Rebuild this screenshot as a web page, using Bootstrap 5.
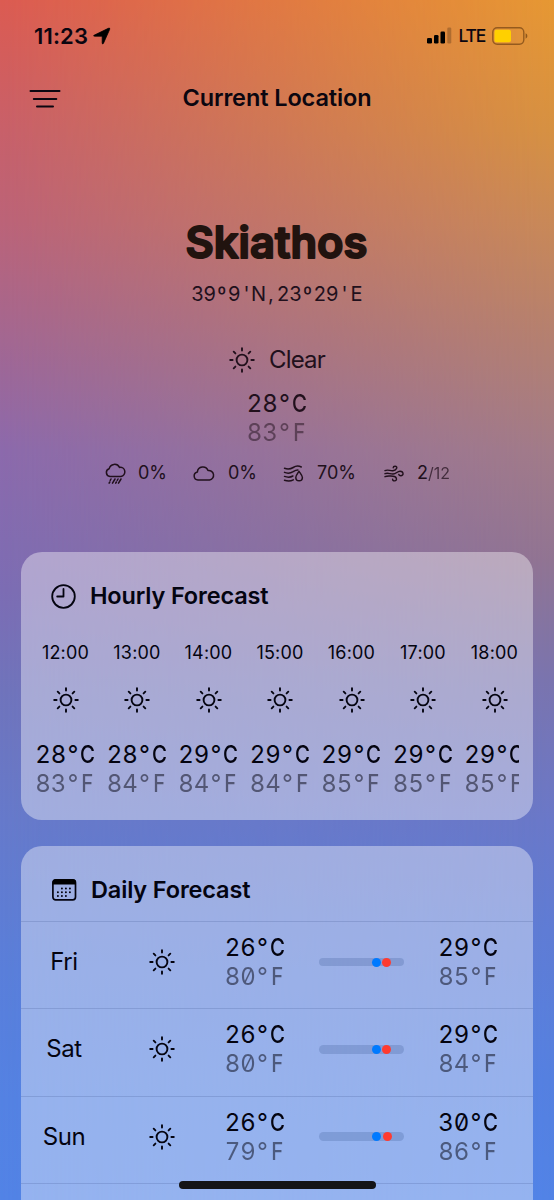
<!DOCTYPE html>
<html lang="en">
<head>
<meta charset="utf-8">
<meta name="viewport" content="width=device-width, initial-scale=1">
<title>Weather</title>
<link href="https://cdn.jsdelivr.net/npm/bootstrap@5.3.0/dist/css/bootstrap.min.css" rel="stylesheet">
<style>
body{font-family:Inter,"Liberation Sans",sans-serif;color:#0b0610;line-height:1;margin:0}
svg{display:block;flex:none;overflow:visible}
.ln{fill:none;stroke:currentColor;stroke-linecap:round;stroke-linejoin:round}
.screen{width:554px;height:1200px;isolation:isolate;background:linear-gradient(#dc5b52 0,#c8606a 130px,#bc6378 220px,#a36792 340px,#8c6aac 450px,#7c6db4 590px,#7074bc 690px,#667acb 820px,#5a7fda 970px,#5482e3 1100px,#5283e6 1200px)}
.screen::before{content:"";position:absolute;inset:0;z-index:-1;background:linear-gradient(#e69833 0,#d69142 130px,#c98957 220px,#b48070 340px,#a27b88 450px,#917492 560px,#7a74ae 680px,#6a78c8 820px,#5f7cd4 930px,#5580e0 1080px,#5283e6 1200px);-webkit-mask-image:linear-gradient(90deg,transparent,#000);mask-image:linear-gradient(90deg,transparent,#000)}
.status{height:70px;padding:1px 26px 0 34px}
.clock{font-size:22px;font-weight:600;letter-spacing:.15px}
.lte{font-size:17.5px;font-weight:500;letter-spacing:-1.2px}
.topbar{height:57px;padding-left:29px}
.title{font-size:23.5px;font-weight:600;letter-spacing:-.1px;top:16px}
.hero{height:425px;padding-top:88px;color:#21101c}
.coords{font-size:20px;height:22px;margin-top:10px}
.cond{font-size:24px;margin-top:42px;height:26px;gap:14px;letter-spacing:-.8px}
.mono{font-size:24px;font-feature-settings:"tnum","zero";white-space:nowrap;height:29px;line-height:29px;width:59px;display:flex}
.mono span{width:14.8px;display:inline-flex;justify-content:center}
.mono span.num{width:29.6px}
.mono .unit{transform:scaleX(.85);font-weight:500}
.mono.f{opacity:.5}
.coords span{width:12.25px;display:inline-flex;justify-content:center}
.stats{margin-top:12px;height:28px;font-size:18px;padding-left:105px}
.stats>div{display:flex;align-items:center}
.glass{background:rgba(255,255,255,.39);border:0;border-radius:21px;margin:0 21.5px 0 21px;color:#040410}
.hourly{height:268px}
.daily{height:354px;margin-top:26px;border-radius:21px 21px 0 0;overflow:hidden}
.head{font-size:23.5px;font-weight:600;letter-spacing:-.15px}
.hours{margin:0 13.5px 0 15px;gap:12.5px;overflow:hidden}
.hour{width:59px;flex:none}
.hour svg{margin:24.5px 0 27px}
.hour time{font-size:18px;letter-spacing:.2px;height:20px;line-height:20px;white-space:nowrap}
.day{height:87.3px;padding-bottom:6px;border-top:1px solid rgba(50,70,130,.19);display:grid;grid-template-columns:86px 111px 94px 119px 59px;align-items:center}
.day .name{font-size:24px;text-align:center;letter-spacing:-.4px}
.track{width:85px;height:8.5px;border-radius:5px;background:rgba(65,95,155,.27);position:relative}
.dot{position:absolute;width:9px;height:9px;border-radius:50%;top:0;background:#007aff}
.dot.hi{background:#ff3b30}
.home{position:absolute;left:179px;top:1181px;width:197px;height:7.5px;border-radius:4px;background:#141416}
</style>
</head>
<body>
<svg width="0" height="0" class="position-absolute"><defs>
<symbol id="sun" viewBox="0 0 26 26"><g class="ln" stroke-width="1.9"><circle cx="13" cy="13" r="5.4"/><path d="M13 1.2v2.4M13 22.4v2.4M1.2 13h2.4M22.4 13h2.4M4.7 4.7l1.7 1.7M19.6 19.6l1.7 1.7M4.7 21.3l1.7-1.7M19.6 6.4l1.7-1.7"/></g></symbol>
</defs></svg>
<main class="screen position-relative overflow-hidden">
<div class="status d-flex align-items-center">
<span class="clock">11:23</span>
<svg style="margin-left:5px" width="18" height="18" viewBox="0 0 19 18"><path d="M1 8.3 16.2.9Q18.4 0 17.5 2.2L11 16.8Q10 18.2 9.7 16.5V9.9Q9.7 9.2 9 9.2H1.7Q-.1 9.1 1 8.3Z" fill="#000" stroke="#000" stroke-width=".8" stroke-linejoin="round"/></svg>
<svg class="ms-auto" width="25" height="17" viewBox="0 0 25 17"><g fill="#000"><rect x="0" y="11" width="5" height="5.5" rx="1.3"/><rect x="7" y="8" width="4.5" height="8.5" rx="1.3"/><rect x="13.5" y="4.5" width="4.5" height="12" rx="1.3"/><rect x="20.3" y=".5" width="4" height="16" rx="1.3" opacity=".22"/></g></svg>
<span class="lte" style="margin-left:6px">LTE</span>
<svg style="margin-left:7px" width="36" height="18" viewBox="0 0 36 18"><rect x=".8" y=".8" width="31" height="16.4" rx="4.4" fill="none" stroke="#6b3d10" stroke-opacity=".65" stroke-width="1.4"/><rect x="2.5" y="2.8" width="16.5" height="12.4" rx="2" fill="#ffd000"/><path d="M33.6 6.3q1.8.8 1.8 2.7t-1.8 2.7z" fill="#6b3d10" opacity=".7"/></svg>
</div>
<header class="topbar d-flex align-items-center position-relative">
<svg width="32" height="20" viewBox="0 0 32 20"><path class="ln" stroke-width="2" d="M1.5 2h29M4.8 10h22.5M8 17.6h16"/></svg>
<span class="title position-absolute start-50 translate-middle-x text-nowrap">Current Location</span>
</header>
<section class="hero d-flex flex-column align-items-center">
<svg width="200" height="58" viewBox="0 0 200 58"><text x="99.5" y="43" text-anchor="middle" textLength="182" lengthAdjust="spacingAndGlyphs" font-size="44" font-weight="600" fill="#21130f" stroke="#21130f" stroke-width="2" stroke-linejoin="round">Skiathos</text></svg>
<div class="coords d-flex align-items-center"><span>3</span><span>9</span><span>º</span><span>9</span><span>'</span><span>N</span><span>,</span><span>2</span><span>3</span><span>º</span><span>2</span><span>9</span><span>'</span><span>E</span></div>
<div class="cond d-flex align-items-center"><svg width="26" height="26"><use href="#sun"/></svg><span>Clear</span></div>
<div class="mono" style="margin-top:16px"><span class="num">28</span><span>°</span><span class="unit">C</span></div>
<div class="mono f"><span class="num">83</span><span>°</span><span class="unit">F</span></div>
<div class="stats d-flex align-self-start">
<div style="width:88px"><svg width="21" height="21" viewBox="0 0 21 21"><g class="ln" stroke-width="1.5"><path d="M5 13.5A4 4 0 0 1 4.2 5.7 5.5 5.5 0 0 1 14.5 4.4 4.6 4.6 0 1 1 16 13.5Z"/><path d="M6 16l-.8 1.4M10 16l-2.5 4.2M13 16l-.8 1.4M16 16l-2.5 4.2M4.8 19l-.7 1.2M11.4 19l-.7 1.2"/></g></svg><span style="margin-left:12px">0%</span></div>
<div style="width:90px"><svg width="22" height="15" viewBox="0 0 22 15"><path class="ln" stroke-width="1.5" d="M5 14A4.1 4.1 0 0 1 4.4 5.9 5.5 5.5 0 0 1 15 4.5 4.8 4.8 0 1 1 16.5 14Z"/></svg><span style="margin-left:13px">0%</span></div>
<div style="width:101px"><svg width="21" height="17" viewBox="0 0 21 17"><g class="ln" stroke-width="1.5"><path d="M1.5 3.3C5 4.7 7.5 4.2 10.2 2.5 13 .7 15.4.6 18.3 2M1.5 7.4c3.5 1.4 6 .9 8.7-.7 1.6-1 3.1-1.6 4.7-1.6M1.5 11.4c3.3 1.2 6 1 8.4-.4M1.5 15.3c3.4 1.2 6.3 1 8.8-.4M16 6.3c-1.7 2.5-3.2 4.3-3.2 6.2a3.3 3.3 0 0 0 6.6 0c0-1.9-1.7-3.7-3.4-6.2Z"/></g></svg><span style="margin-left:13px">70%</span></div>
<div><svg width="20" height="17" viewBox="0 0 20 17"><g class="ln" stroke-width="1.4"><path d="M1 5.6C4 4.3 6 6 9 5.7 13 5.4 14.2 1.2 11 1.2c-1.2 0-1.8.7-1.8 1.5M1 8.7c3-1.2 5 .4 8 .3 3.4-.1 4-2.6 7-2.8 3.8-.1 4 4.6.8 4.6-1.2 0-1.8-.5-2-1.3M1 11.7c3-1.3 5-.5 8-.5 4 0 4.6 4.7 1.6 4.7-1.4 0-2-.8-2-1.6"/></g></svg><span style="margin-left:13px">2<span style="font-size:16px;opacity:.72">/12</span></span></div>
</div>
</section>
<section class="glass card hourly">
<div class="head d-flex align-items-center" style="padding:31px 0 0 30px;height:57px;gap:14px"><svg width="25" height="25" viewBox="0 0 25 25"><g class="ln" stroke-width="1.8"><circle cx="12.5" cy="12.5" r="11.3"/><path d="M12.5 5v7.5H6.2"/></g></svg>Hourly Forecast</div>
<div class="hours d-flex" style="padding-top:33.5px">
<div class="hour d-flex flex-column align-items-center"><time>12:00</time><svg width="26" height="26"><use href="#sun"/></svg><div class="mono"><span class="num">28</span><span>°</span><span class="unit">C</span></div><div class="mono f"><span class="num">83</span><span>°</span><span class="unit">F</span></div></div>
<div class="hour d-flex flex-column align-items-center"><time>13:00</time><svg width="26" height="26"><use href="#sun"/></svg><div class="mono"><span class="num">28</span><span>°</span><span class="unit">C</span></div><div class="mono f"><span class="num">84</span><span>°</span><span class="unit">F</span></div></div>
<div class="hour d-flex flex-column align-items-center"><time>14:00</time><svg width="26" height="26"><use href="#sun"/></svg><div class="mono"><span class="num">29</span><span>°</span><span class="unit">C</span></div><div class="mono f"><span class="num">84</span><span>°</span><span class="unit">F</span></div></div>
<div class="hour d-flex flex-column align-items-center"><time>15:00</time><svg width="26" height="26"><use href="#sun"/></svg><div class="mono"><span class="num">29</span><span>°</span><span class="unit">C</span></div><div class="mono f"><span class="num">84</span><span>°</span><span class="unit">F</span></div></div>
<div class="hour d-flex flex-column align-items-center"><time>16:00</time><svg width="26" height="26"><use href="#sun"/></svg><div class="mono"><span class="num">29</span><span>°</span><span class="unit">C</span></div><div class="mono f"><span class="num">85</span><span>°</span><span class="unit">F</span></div></div>
<div class="hour d-flex flex-column align-items-center"><time>17:00</time><svg width="26" height="26"><use href="#sun"/></svg><div class="mono"><span class="num">29</span><span>°</span><span class="unit">C</span></div><div class="mono f"><span class="num">85</span><span>°</span><span class="unit">F</span></div></div>
<div class="hour d-flex flex-column align-items-center"><time>18:00</time><svg width="26" height="26"><use href="#sun"/></svg><div class="mono"><span class="num">29</span><span>°</span><span class="unit">C</span></div><div class="mono f"><span class="num">85</span><span>°</span><span class="unit">F</span></div></div>
</div>
</section>
<section class="glass card daily">
<div class="head d-flex align-items-center flex-shrink-0" style="padding:12px 0 0 31px;height:75px;gap:14px"><svg width="25" height="22" viewBox="0 0 25 22"><rect x=".9" y=".9" width="22.6" height="20" rx="2.8" fill="none" stroke="currentColor" stroke-width="1.7"/><path d="M.5 5.6V3.5Q.5.3 3.5.3h17.4q3 0 3 3.2v2.1z"/><path class="ln" stroke-width="2" stroke-dasharray="0 4" d="M9.9 9.4h8.2M5.9 13.2h12.2M5.9 17h8.2"/></svg>Daily Forecast</div>
<div class="day flex-shrink-0"><span class="name">Fri</span><svg width="26" height="26" style="margin-left:42px"><use href="#sun"/></svg><div style="margin-left:7.5px"><div class="mono"><span class="num">26</span><span>°</span><span class="unit">C</span></div><div class="mono f"><span class="num">80</span><span>°</span><span class="unit">F</span></div></div><div class="track" style="margin-left:7px"><i class="dot" style="left:52.5px"></i><i class="dot hi" style="left:63px"></i></div><div style="margin-left:8px"><div class="mono"><span class="num">29</span><span>°</span><span class="unit">C</span></div><div class="mono f"><span class="num">85</span><span>°</span><span class="unit">F</span></div></div></div>
<div class="day flex-shrink-0"><span class="name">Sat</span><svg width="26" height="26" style="margin-left:42px"><use href="#sun"/></svg><div style="margin-left:7.5px"><div class="mono"><span class="num">26</span><span>°</span><span class="unit">C</span></div><div class="mono f"><span class="num">80</span><span>°</span><span class="unit">F</span></div></div><div class="track" style="margin-left:7px"><i class="dot" style="left:52.5px"></i><i class="dot hi" style="left:62.5px"></i></div><div style="margin-left:8px"><div class="mono"><span class="num">29</span><span>°</span><span class="unit">C</span></div><div class="mono f"><span class="num">84</span><span>°</span><span class="unit">F</span></div></div></div>
<div class="day flex-shrink-0"><span class="name">Sun</span><svg width="26" height="26" style="margin-left:42px"><use href="#sun"/></svg><div style="margin-left:7.5px"><div class="mono"><span class="num">26</span><span>°</span><span class="unit">C</span></div><div class="mono f"><span class="num">79</span><span>°</span><span class="unit">F</span></div></div><div class="track" style="margin-left:7px"><i class="dot" style="left:52.5px"></i><i class="dot hi" style="left:63.5px"></i></div><div style="margin-left:8px"><div class="mono"><span class="num">30</span><span>°</span><span class="unit">C</span></div><div class="mono f"><span class="num">86</span><span>°</span><span class="unit">F</span></div></div></div>
<div class="day flex-shrink-0"></div>
</section>
<div class="home"></div>
</main>
<script src="https://cdn.jsdelivr.net/npm/bootstrap@5.3.0/dist/js/bootstrap.bundle.min.js"></script>
</body>
</html>
